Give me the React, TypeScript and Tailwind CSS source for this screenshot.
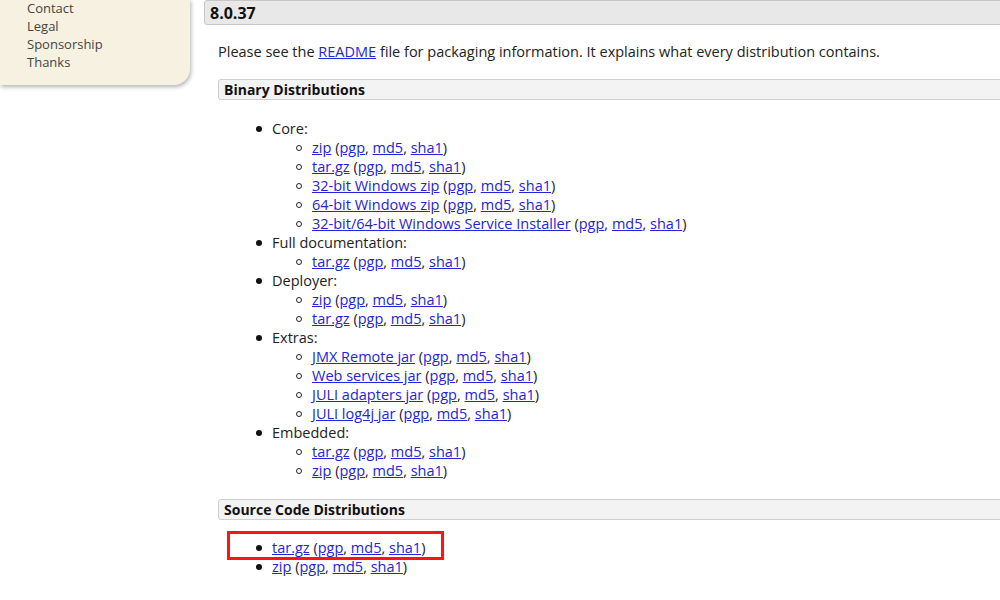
const LINK = "text-[#2424d8] underline";

type Group = { title: string; items: string[] };

const binary: Group[] = [
  {
    title: "Core:",
    items: [
      "zip",
      "tar.gz",
      "32-bit Windows zip",
      "64-bit Windows zip",
      "32-bit/64-bit Windows Service Installer",
    ],
  },
  { title: "Full documentation:", items: ["tar.gz"] },
  { title: "Deployer:", items: ["zip", "tar.gz"] },
  {
    title: "Extras:",
    items: ["JMX Remote jar", "Web services jar", "JULI adapters jar", "JULI log4j jar"],
  },
  { title: "Embedded:", items: ["tar.gz", "zip"] },
];

const Sigs = () => (
  <>
    {" "}(<a className={LINK}>pgp</a>, <a className={LINK}>md5</a>,{" "}
    <a className={LINK}>sha1</a>)
  </>
);

const Disc = () => <span className="w-[6px] h-[6px] rounded-full bg-[#111] shrink-0" />;
const Circle = () => (
  <span className="w-[6px] h-[6px] rounded-full border border-[#222] shrink-0" />
);

const SectionBox = ({ title }: { title: string }) => (
  <div className="h-[21px] -mr-4 flex items-center pl-[5px] bg-[#f3f3f3] border border-[#cfcfcf] rounded-[3px] font-bold text-[14px] text-[#111]">
    {title}
  </div>
);

const SourceItem = ({ label }: { label: string }) => (
  <li className="h-[19px] flex items-center">
    <span className="w-[54px] flex justify-end pr-[10px]">
      <Disc />
    </span>
    <span className="whitespace-nowrap">
      <a className={LINK}>{label}</a>
      <Sigs />
    </span>
  </li>
);

export default function App() {
  return (
    <div
      className="w-[1000px] h-[600px] overflow-hidden bg-white flex text-[#222]"
      style={{ fontFamily: '"Open Sans", "Liberation Sans", sans-serif' }}
    >
      <aside className="w-[190px] shrink-0 self-start h-[86px] -mt-px bg-[#f7f1e2] rounded-br-[16px] shadow-[1px_2px_4px_rgba(0,0,0,0.3)] pl-[27px] text-[13px] text-[#444] leading-[18px]">
        <div>Contact</div>
        <div>Legal</div>
        <div>Sponsorship</div>
        <div>Thanks</div>
      </aside>

      <main className="flex-1 ml-[14px] text-[14.5px]">
        <div className="h-[25px] -mr-4 flex items-center pl-[5px] bg-[#e8e8e8] border border-[#c8c8c8] rounded-[3px] font-bold text-[16px] text-[#111]">
          8.0.37
        </div>

        <div className="pl-[14px]">
          <p className="mt-[17px] leading-[19px]">
            Please see the <a className={LINK}>README</a> file for packaging
            information. It explains what every distribution contains.
          </p>

          <div className="mt-[18px]">
            <SectionBox title="Binary Distributions" />
          </div>

          <ul className="mt-[19px] leading-[19px]">
            {binary.map((g) => (
              <li key={g.title}>
                <div className="h-[19px] flex items-center">
                  <span className="w-[54px] flex justify-end pr-[10px]">
                    <Disc />
                  </span>
                  {g.title}
                </div>
                <ul>
                  {g.items.map((it, i) => (
                    <li key={i} className="h-[19px] flex items-center">
                      <span className="w-[94px] flex justify-end pr-[10px]">
                        <Circle />
                      </span>
                      <span className="whitespace-nowrap">
                        <a className={LINK}>{it}</a>
                        <Sigs />
                      </span>
                    </li>
                  ))}
                </ul>
              </li>
            ))}
          </ul>

          <div className="mt-[19px]">
            <SectionBox title="Source Code Distributions" />
          </div>

          <ul className="mt-[18px] leading-[19px] relative">
            <div className="absolute left-[9px] top-[-7px] w-[217px] h-[29px] border-[3px] border-[#ff1414]" />
            <SourceItem label="tar.gz" />
            <SourceItem label="zip" />
          </ul>
        </div>
      </main>
    </div>
  );
}
